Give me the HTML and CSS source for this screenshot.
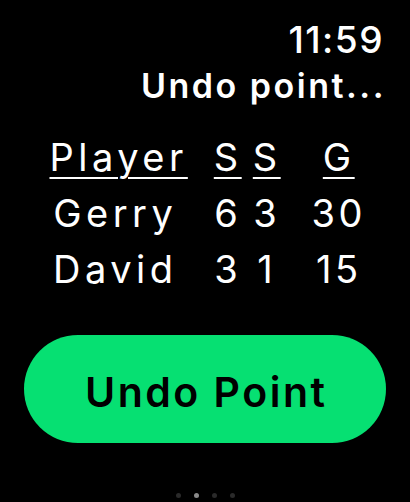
FILE: index.html
```html
<!DOCTYPE html>
<html>
<head>
<meta charset="utf-8">
<link rel="stylesheet" href="styles.css">
</head>
<body>
<div class="screen">
  <header class="top">
    <div class="time">11:59</div>
    <div class="title">Undo point...</div>
  </header>
  <div class="table">
    <div class="cell name head">Player</div>
    <div class="cell head">S</div>
    <div class="cell head">S</div>
    <div class="cell head">G</div>
    <div class="cell name">Gerry</div>
    <div class="cell">6</div>
    <div class="cell">3</div>
    <div class="cell">30</div>
    <div class="cell name">David</div>
    <div class="cell">3</div>
    <div class="cell">1</div>
    <div class="cell">15</div>
  </div>
  <button class="undo">Undo Point</button>
  <div class="dots">
    <span class="dot"></span>
    <span class="dot on"></span>
    <span class="dot"></span>
    <span class="dot"></span>
  </div>
</div>
</body>
</html>
```
FILE: styles.css
```css
html, body {
  margin: 0;
  padding: 0;
  background: #000;
}
.screen {
  width: 410px;
  height: 502px;
  display: flex;
  flex-direction: column;
  font-family: Inter, "Open Sans", sans-serif;
  color: #fff;
}
.top {
  display: flex;
  flex-direction: column;
  align-items: flex-end;
  padding: 18px 24px 0 0;
}
.time {
  font-size: 37px;
  font-weight: 500;
  line-height: 44px;
  letter-spacing: 1.5px;
  margin-right: 2px;
}
.title {
  font-size: 34px;
  font-weight: 600;
  line-height: 44px;
  letter-spacing: 2.5px;
  margin-top: 2px;
}
.table {
  display: grid;
  grid-template-columns: 161px 40px 38px 106px;
  margin: 21px 0 0 45px;
  width: fit-content;
}
.cell {
  font-size: 38px;
  line-height: 56px;
  letter-spacing: 3.5px;
  padding-left: 3.5px;
  text-align: center;
  white-space: nowrap;
}
.cell.name {
  margin-right: 25px;
  letter-spacing: 4.5px;
  padding-left: 4.5px;
}
.head {
  text-decoration: underline;
  text-underline-offset: 6px;
  text-decoration-thickness: 2px;
}
.undo {
  margin: 38px 24px 0 24px;
  height: 108px;
  border: none;
  border-radius: 54px;
  background: #06e072;
  color: #000;
  font-family: Inter, "Open Sans", sans-serif;
  font-size: 41px;
  font-weight: 600;
  letter-spacing: 2.5px;
  padding: 6px 0 0 2.5px;
}
.dots {
  display: flex;
  justify-content: center;
  gap: 13px;
  margin-top: 50px;
}
.dot {
  width: 5px;
  height: 5px;
  border-radius: 50%;
  background: #2a2a2a;
}
.dot.on {
  background: #8a8a8a;
}
```
